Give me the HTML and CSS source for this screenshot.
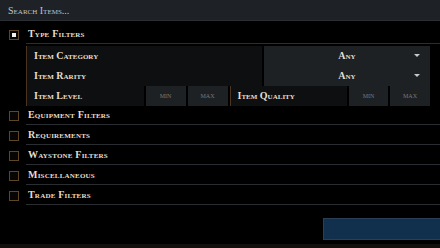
FILE: index.html
```html
<!DOCTYPE html>
<html lang="en">
<head>
    <meta charset="UTF-8">
    <meta name="viewport" content="width=device-width, initial-scale=1.0">
    <title>Trade Search</title>
    <link rel="stylesheet" href="styles.css">
</head>
<body>
    <div class="search">Search Items...</div>

    <div class="filters">
        <div class="group open">
            <div class="check checked"></div>
            <div class="group-title">Type Filters</div>
            <div class="group-body">
                <div class="row two">
                    <div class="label">Item Category</div>
                    <div class="select">Any<span class="caret"></span></div>
                </div>
                <div class="row two">
                    <div class="label">Item Rarity</div>
                    <div class="select">Any<span class="caret"></span></div>
                </div>
                <div class="row range">
                    <div class="label">Item Level</div>
                    <div class="num">min</div>
                    <div class="num">max</div>
                    <div class="label">Item Quality</div>
                    <div class="num">min</div>
                    <div class="num">max</div>
                </div>
            </div>
        </div>

        <div class="group">
            <div class="check"></div>
            <div class="group-title">Equipment Filters</div>
        </div>
        <div class="group">
            <div class="check"></div>
            <div class="group-title">Requirements</div>
        </div>
        <div class="group">
            <div class="check"></div>
            <div class="group-title">Waystone Filters</div>
        </div>
        <div class="group">
            <div class="check"></div>
            <div class="group-title">Miscellaneous</div>
        </div>
        <div class="group">
            <div class="check"></div>
            <div class="group-title">Trade Filters</div>
        </div>
    </div>

    <div class="actions">
        <button class="go"></button>
    </div>
    <div class="footer"></div>
</body>
</html>
```

FILE: styles.css
```css
body {
    margin: 0;
    background-color: #000;
    font-family: "Liberation Serif", serif;
    font-variant: small-caps;
    font-weight: bold;
    font-size: 10px;
    color: #e6dfcd;
    width: 440px;
    height: 248px;
    overflow: hidden;
}

.search {
    height: 20px;
    line-height: 21px;
    padding-left: 8px;
    background-color: #1e2125;
    border-bottom: 1px solid #2b2e33;
    color: #c4c4c4;
    font-weight: normal;
}

.filters {
    padding-top: 3px;
}

.group {
    display: grid;
    grid-template-columns: 26px 1fr;
}

.check {
    width: 8px;
    height: 8px;
    margin: 6px 0 0 9px;
    border: 1px solid #5e4727;
    background-color: #070605;
    position: relative;
}

.check.checked::after {
    content: '';
    position: absolute;
    left: 2px;
    top: 2px;
    width: 4px;
    height: 4px;
    background-color: #f2f2f2;
}

.group-title {
    height: 19px;
    line-height: 20px;
    padding-left: 2px;
    letter-spacing: 0.2px;
    border-bottom: 1px solid #2a2d32;
}

.group-body {
    grid-column: 2;
    display: flex;
    flex-direction: column;
    gap: 1px;
    padding: 2px 10px 0 0;
}

.row {
    display: grid;
    height: 19px;
    column-gap: 2px;
}

.row.two {
    grid-template-columns: 1fr 166px;
}

.row.range {
    grid-template-columns: 1fr 40px 40px 1fr 39px 40px;
}

.label {
    background-color: #0e0f11;
    border-left: 1px solid #4b3420;
    padding-left: 7px;
    line-height: 20px;
}

.select {
    background-color: #1e2124;
    text-align: center;
    line-height: 20px;
    position: relative;
    color: #ddd;
}

.caret {
    position: absolute;
    right: 10px;
    top: 8px;
    border-left: 3px solid transparent;
    border-right: 3px solid transparent;
    border-top: 3px solid #c8c8c8;
}

.num {
    background-color: #1e2124;
    text-align: center;
    line-height: 20px;
    font-weight: normal;
    font-size: 8px;
    color: #76787b;
}

.actions {
    display: flex;
    justify-content: flex-end;
    padding-top: 13px;
}

.go {
    width: 118px;
    height: 22px;
    margin-right: -1px;
    background-color: #11304d;
    border: 1px solid #2b3e58;
    padding: 0;
}

.footer {
    margin-top: 4px;
    height: 6px;
    background-color: #130f0d;
}
```
